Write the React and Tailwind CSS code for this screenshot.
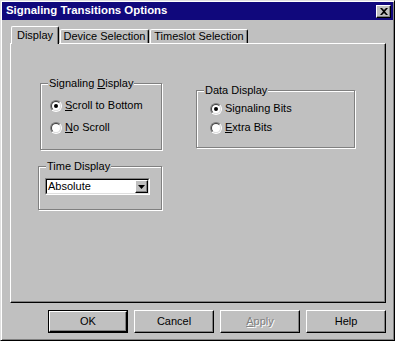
import React from 'react';

// Win95-style 3D edges
const raised = 'border border-t-white border-l-white border-r-black border-b-black shadow-[inset_-1px_-1px_0_#808080]';

function Radio({ checked }) {
  return (
    <span className="inline-block w-[12px] h-[12px] rounded-full border border-t-[#808080] border-l-[#808080] border-r-white border-b-white shrink-0">
      <span className="flex items-center justify-center w-full h-full rounded-full bg-white border border-t-[#404040] border-l-[#404040] border-r-[#dfdfdf] border-b-[#dfdfdf]">
        {checked && <span className="block w-[4px] h-[4px] rounded-full bg-black" />}
      </span>
    </span>
  );
}

function Option({ checked, children, className = '' }) {
  return (
    <div className={`flex items-center gap-[3px] h-[13px] ${className}`}>
      <Radio checked={checked} />
      <span className="leading-[13px]">{children}</span>
    </div>
  );
}

function Group({ title, className = '', inner = '', children }) {
  return (
    <fieldset className={`border border-[#808080] shadow-[1px_1px_0_#fff,inset_1px_1px_0_#fff] ${className}`}>
      <legend className="ml-[7px] px-[1px] bg-[#c0c0c0] leading-[13px]">{title}</legend>
      <div className={inner}>{children}</div>
    </fieldset>
  );
}

function Button({ children, isDefault, disabled }) {
  return (
    <div className={`w-[80px] h-[23px] ${isDefault ? 'border border-black' : ''}`}>
      <div className={`w-full h-full flex items-center justify-center ${raised}`}>
        <span className={disabled ? 'text-[#808080] [text-shadow:1px_1px_0_#fff]' : ''}>{children}</span>
      </div>
    </div>
  );
}

export default function App() {
  return (
    <div className="font-['Liberation_Sans',Arial,sans-serif] text-[11px] text-black">
      <div className="w-[395px] h-[341px] bg-[#c0c0c0] p-[1px] border border-t-[#dfdfdf] border-l-[#dfdfdf] border-r-black border-b-black shadow-[inset_1px_1px_0_#fff,inset_-1px_-1px_0_#808080]">
        {/* title bar */}
        <div className="h-[18px] bg-[#10087c] flex items-center justify-between pl-[4px] pr-[2px]">
          <span className="text-white font-bold text-[11.4px]">Signaling Transitions Options</span>
          <div className={`w-[15px] h-[13px] bg-[#c0c0c0] flex items-center justify-center ${raised}`}>
            <svg width="8" height="7" viewBox="0 0 8 7">
              <path d="M0 0h2l2 2 2-2h2L5 3.5 8 7H6L4 5 2 7H0l3-3.5z" fill="#000" />
            </svg>
          </div>
        </div>

        {/* tabs */}
        <div className="flex items-end h-[17px] mt-[6px] pl-[9px]">
          <div className="relative z-10 -mb-[1px] w-[48px] h-[18px] bg-[#c0c0c0] border-l border-t border-white border-r border-r-black rounded-t-[2px] shadow-[inset_-1px_0_0_#808080] flex items-center justify-center">
            Display
          </div>
          <div className="ml-[1px] w-[89px] h-[14px] border-l border-t border-white border-r border-r-black rounded-t-[2px] shadow-[inset_-1px_0_0_#808080] flex items-center justify-center">
            Device Selection
          </div>
          <div className="ml-[1px] w-[98px] h-[14px] border-l border-t border-white border-r border-r-black rounded-t-[2px] shadow-[inset_-1px_0_0_#808080] flex items-center justify-center">
            Timeslot Selection
          </div>
        </div>

        {/* panel */}
        <div className={`ml-[8px] w-[376px] h-[260px] ${raised} flex pl-[29px] pt-[33px]`}>
          <div className="flex flex-col w-[122px]">
            <Group title={<>Signaling <span className="underline underline-offset-[1px]">D</span>isplay</>} className="h-[73px]" inner="pl-[9px]">
              <Option checked className="mt-[9px]"><span className="underline underline-offset-[1px]">S</span>croll to Bottom</Option>
              <Option className="mt-[9px]"><span className="underline underline-offset-[1px]">N</span>o Scroll</Option>
            </Group>
            <Group title="Time Display" className="-ml-[2px] mt-[10px] h-[50px]" inner="pl-[6px]">
              <div className="mt-[5px] w-[105px] h-[17px] bg-white border border-t-[#808080] border-l-[#808080] border-r-white border-b-white">
                <div className="w-full h-full flex items-center border border-t-black border-l-black border-r-[#dfdfdf] border-b-[#dfdfdf]">
                  <span className="flex-1 pl-[1px] leading-[13px]">Absolute</span>
                  <div className={`w-[13px] h-full bg-[#c0c0c0] flex items-center justify-center ${raised}`}>
                    <svg width="7" height="4" viewBox="0 0 7 4">
                      <path d="M0 0h7L3.5 4z" fill="#000" />
                    </svg>
                  </div>
                </div>
              </div>
            </Group>
          </div>

          <Group title="Data Display" className="ml-[34px] mt-[7px] w-[159px] h-[64px] self-start" inner="pl-[13px]">
            <Option checked className="mt-[5px]">Signaling Bits</Option>
            <Option className="mt-[6px]"><span className="underline underline-offset-[1px]">E</span>xtra Bits</Option>
          </Group>
        </div>

        {/* buttons */}
        <div className="ml-[8px] w-[376px] mt-[7px] flex justify-end gap-[6px]">
          <Button isDefault>OK</Button>
          <Button>Cancel</Button>
          <Button disabled><span className="underline underline-offset-[1px]">A</span>pply</Button>
          <Button>Help</Button>
        </div>
      </div>
    </div>
  );
}
